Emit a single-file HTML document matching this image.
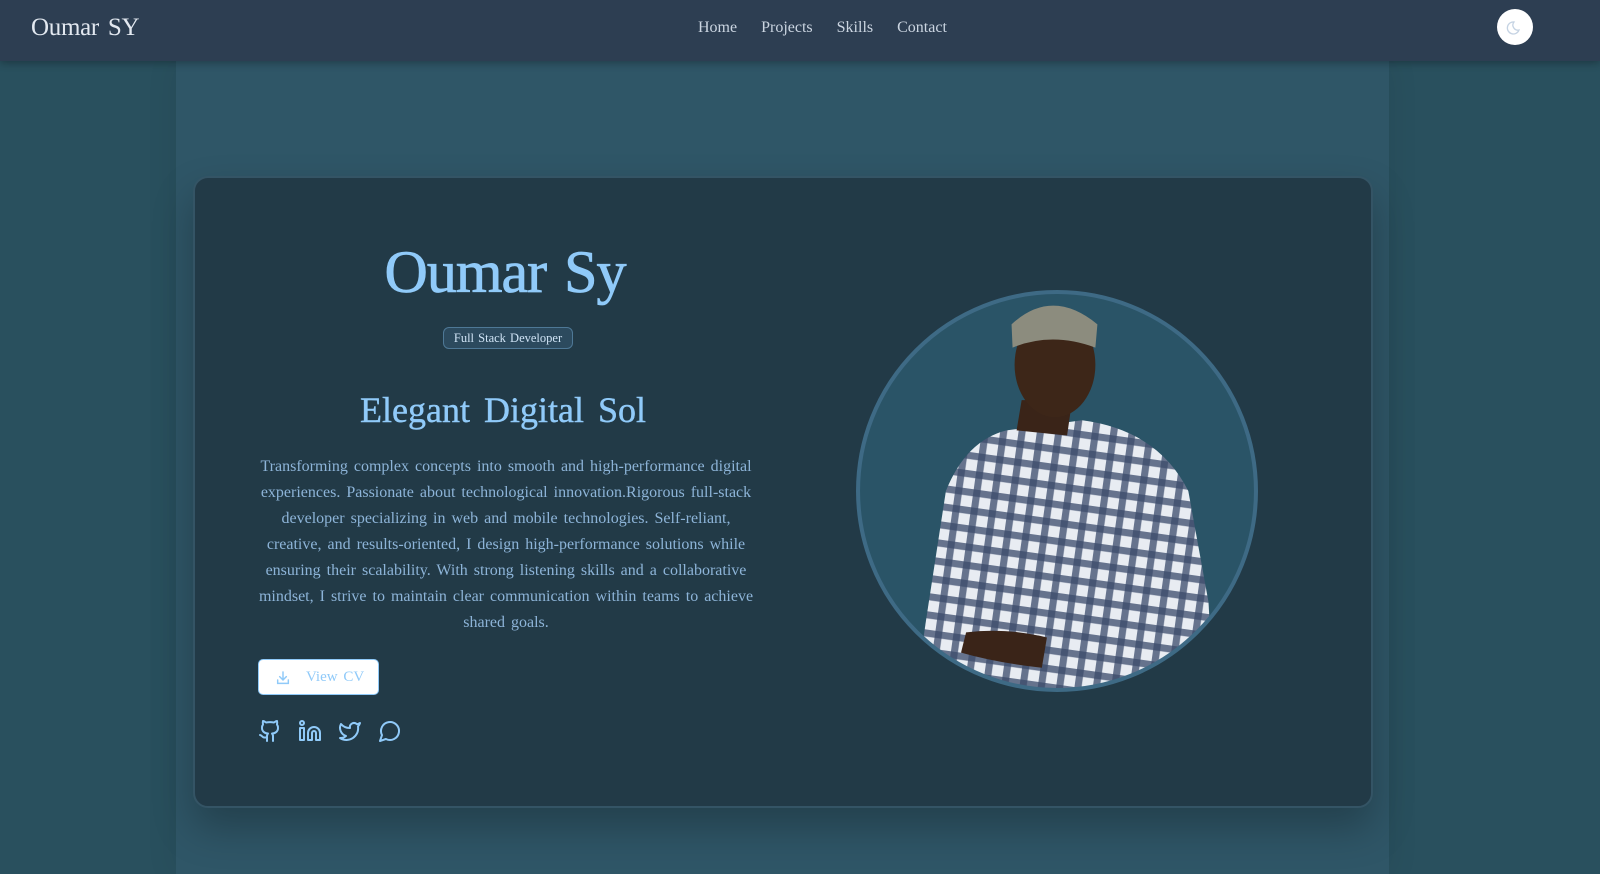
<!DOCTYPE html>
<html><head><meta charset="utf-8"><style>
*{margin:0;padding:0;box-sizing:border-box}
body{width:1600px;height:874px;overflow:hidden;background:#29505e;font-family:"Liberation Serif",serif;position:relative}
.hdr{position:absolute;left:0;top:0;width:1600px;height:61px;background:#2d3e52;box-shadow:0 2px 8px rgba(0,0,0,.3);z-index:3}
.logo{position:absolute;left:31px;top:14px;font-size:25px;color:#e2e8f0;word-spacing:3px;letter-spacing:-.3px}
.nav{position:absolute;left:698px;top:19px;font-size:16px;color:#cbd5e1;word-spacing:3px}
.nav span{margin-right:24px}
.moon{position:absolute;left:1497px;top:9px;width:36px;height:36px;border-radius:50%;background:#fff}
.col{position:absolute;left:176px;top:61px;width:1213px;height:813px;background:#2f5667;box-shadow:0 0 30px rgba(0,0,0,.08)}
.card{position:absolute;left:193px;top:176px;width:1180px;height:632px;background:#223a47;border:2px solid #345465;border-radius:15px;box-shadow:0 20px 40px rgba(0,0,0,.25)}
h1{position:absolute;left:265px;width:480px;top:238px;text-align:center;font-size:60px;font-weight:normal;color:#90caf9;word-spacing:4px;letter-spacing:-1px;-webkit-text-stroke:.8px #90caf9}
.badge{position:absolute;left:443px;top:327px;width:130px;height:22px;border:1px solid #4e7896;background:#2c4a5e;border-radius:6px;color:#cfe3f5;font-size:12.5px;text-align:center;line-height:20px;word-spacing:1px}
h2{position:absolute;left:253px;width:500px;top:389px;text-align:center;font-size:36px;font-weight:normal;color:#90caf9;word-spacing:5px;-webkit-text-stroke:.4px #90caf9}
p{position:absolute;left:256px;width:500px;top:454px;text-align:center;font-size:16px;line-height:26px;color:#8db4d8;word-spacing:2px}
.btn{position:absolute;left:258px;top:659px;width:121px;height:36px;background:#fff;border-radius:5px;border:1px solid #90caf9;color:#90caf9;font-size:15px;line-height:34px;padding-left:47px;word-spacing:2px}
.icons{position:absolute;left:258px;top:719px}
.icons svg{margin-right:12px}
</style></head><body>
<div class="hdr"><div class="logo">Oumar SY</div>
<div class="nav"><span>Home</span><span>Projects</span><span>Skills</span><span>Contact</span></div>
<div class="moon"><svg width="36" height="36" viewBox="0 0 36 36"><path d="M22 21a6 6 0 1 1-5-8 5 5 0 0 0 5 8z" fill="none" stroke="#c5d3e3" stroke-width="1.3"/></svg></div></div>
<div class="col"></div>
<div class="card"></div>
<h1>Oumar Sy</h1>
<div class="badge">Full Stack Developer</div>
<h2>Elegant Digital Sol</h2>
<p>Transforming complex concepts into smooth and high-performance digital experiences. Passionate about technological innovation.Rigorous full-stack developer specializing in web and mobile technologies. Self-reliant, creative, and results-oriented, I design high-performance solutions while ensuring their scalability. With strong listening skills and a collaborative mindset, I strive to maintain clear communication within teams to achieve shared goals.</p>
<div class="btn"><svg style="position:absolute;left:16px;top:10px" width="16" height="16" viewBox="0 0 24 24" fill="none" stroke="#90caf9" stroke-width="2.2" stroke-linecap="round"><path d="M12 3v12M7 10l5 5 5-5M4 15v5h16v-5"/></svg>View CV</div>
<div class="icons">
<svg width="24" height="24" viewBox="0 0 24 24" fill="none" stroke="#90caf9" stroke-width="2" stroke-linecap="round" stroke-linejoin="round"><path d="M15 22v-4a4.8 4.8 0 0 0-1-3.5c3 0 6-2 6-5.5.1-1.3-.3-2.5-1-3.5.3-1.2.3-2.4 0-3.5 0 0-1 0-3 1.5-2.6-.5-5.4-.5-8 0C6 2 5 2 5 2c-.3 1.1-.3 2.3 0 3.5A5.4 5.4 0 0 0 4 9c0 3.5 3 5.5 6 5.5-.4.5-.7 1-.8 1.6-.2.6-.3 1.2-.2 1.9v4M9 18c-4.5 2-5-2-7-2"/></svg>
<svg width="24" height="24" viewBox="0 0 24 24" fill="none" stroke="#90caf9" stroke-width="2" stroke-linecap="round" stroke-linejoin="round"><path d="M16 8a6 6 0 0 1 6 6v7h-4v-7a2 2 0 0 0-4 0v7h-4v-7a6 6 0 0 1 6-6zM2 9h4v12H2z"/><circle cx="4" cy="4" r="2"/></svg>
<svg width="24" height="24" viewBox="0 0 24 24" fill="none" stroke="#90caf9" stroke-width="2" stroke-linecap="round" stroke-linejoin="round"><path d="M22 4s-.7 2.1-2 3.4c1.6 10-9.4 17.3-18 11.6 2.2.1 4.4-.6 6-2C3 15.5.5 9.6 3 5c2.2 2.6 5.6 4.1 9 4-.9-4.2 4-6.6 7-3.8 1.1 0 3-1.2 3-1.2z"/></svg>
<svg width="24" height="24" viewBox="0 0 24 24" fill="none" stroke="#90caf9" stroke-width="2" stroke-linecap="round" stroke-linejoin="round"><path d="M7.9 20A9 9 0 1 0 4 16.1L2 22z"/></svg>
</div>
<svg style="position:absolute;left:855px;top:289px" width="404" height="404" viewBox="0 0 400 400">
<defs><clipPath id="cc"><circle cx="200" cy="200" r="197"/></clipPath>
<pattern id="ck" width="18" height="18" patternUnits="userSpaceOnUse" patternTransform="rotate(8)"><rect width="18" height="18" fill="#e8ecf2"/><rect width="7" height="18" fill="#3a4a6a" opacity=".75"/><rect width="18" height="7" fill="#3a4a6a" opacity=".75"/></pattern></defs>
<circle cx="200" cy="200" r="197" fill="#2a5467"/>
<g clip-path="url(#cc)">
<path d="M70 330 L90 200 Q110 150 150 140 L225 130 Q300 140 330 200 L350 310 L355 400 L60 400 Z" fill="url(#ck)"/>
<path d="M160 140 L165 110 L215 110 L210 145 Z" fill="#3a2418"/>
<ellipse cx="198" cy="75" rx="40" ry="52" fill="#3d2618"/>
<path d="M155 35 Q195 -2 240 35 L238 58 Q195 42 156 58 Z" fill="#8c8c7e"/>
<path d="M110 340 Q150 335 190 345 L185 375 Q140 370 105 360 Z" fill="#3a2418"/>
</g>
<circle cx="200" cy="200" r="197" fill="none" stroke="#3e6a85" stroke-width="4"/>
</svg>
</body></html>
